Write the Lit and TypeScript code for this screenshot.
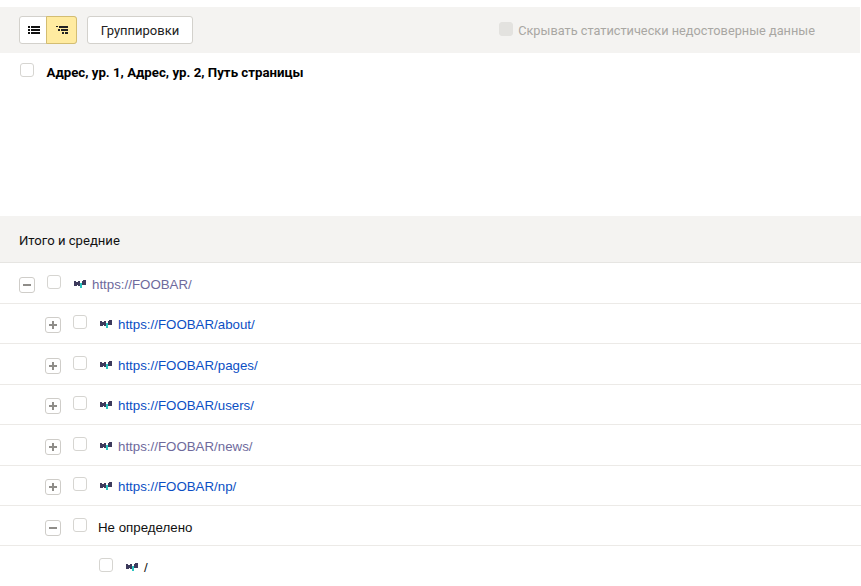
import { LitElement, html, css, svg } from "lit";
import { customElement } from "lit/decorators.js";

const favicon = html`<svg class="fav" width="12" height="8" viewBox="0 0 12 8" shape-rendering="crispEdges">
  <path fill="#3d3a5c" d="M0 1h2v1h2V1h2v5H4V5H3v1H0zM8 1h1V0h3v5H8z"/>
  <path fill="#2bc4c0" d="M6 3h2v5H6z"/>
</svg>`;

type Row = { depth: number; toggle?: "plus" | "minus"; icon: boolean; text: string; kind: "link" | "visited" | "plain" };

const rows: Row[] = [
  { depth: 0, toggle: "minus", icon: true, text: "https://FOOBAR/", kind: "visited" },
  { depth: 1, toggle: "plus", icon: true, text: "https://FOOBAR/about/", kind: "link" },
  { depth: 1, toggle: "plus", icon: true, text: "https://FOOBAR/pages/", kind: "link" },
  { depth: 1, toggle: "plus", icon: true, text: "https://FOOBAR/users/", kind: "link" },
  { depth: 1, toggle: "plus", icon: true, text: "https://FOOBAR/news/", kind: "visited" },
  { depth: 1, toggle: "plus", icon: true, text: "https://FOOBAR/np/", kind: "link" },
  { depth: 1, toggle: "minus", icon: false, text: "Не определено", kind: "plain" },
  { depth: 2, icon: true, text: "/", kind: "plain" },
];

@customElement("app-root")
export class AppRoot extends LitElement {
  static styles = css`
    :host {
      display: block;
      width: 861px;
      height: 586px;
      overflow: hidden;
      background: #fff;
      font-family: Roboto, "Liberation Sans", sans-serif;
      color: #000;
    }
    .toolbar {
      margin-top: 7px;
      height: 46px;
      width: 860px;
      box-sizing: border-box;
      background: #f4f3f1;
      display: flex;
      align-items: center;
      padding: 0 45px 0 19px;
    }
    .seg {
      display: flex;
      width: 58px;
      height: 28px;
      box-sizing: border-box;
      border: 1px solid #d3d1cc;
      border-radius: 3px;
      background: #fff;
    }
    .seg span {
      flex: 1;
      display: flex;
      align-items: center;
      justify-content: center;
    }
    .seg .on {
      flex: 0 0 29px;
      background: #ffeba0;
      border: 1px solid #d3bd72;
      margin: -1px;
      border-radius: 0 3px 3px 0;
    }
    .btn {
      margin-left: 10px;
      width: 106px;
      height: 28px;
      box-sizing: border-box;
      border: 1px solid #d3d1cc;
      border-radius: 3px;
      background: #fff;
      display: flex;
      align-items: center;
      justify-content: center;
      font-size: 13px;
      color: #222;
    }
    .hide {
      margin-left: auto;
      display: flex;
      align-items: center;
      gap: 5px;
      font-size: 12.75px;
      color: #a9a7a3;
    }
    .box {
      flex: none;
      width: 14px;
      height: 14px;
      box-sizing: border-box;
      border: 1px solid #d6d5d1;
      border-radius: 3px;
      background: #fff;
    }
    .box.dis {
      background: #e3e2df;
      border-color: #e3e2df;
      position: relative;
      top: -1px;
    }
    .dims {
      height: 163px;
      box-sizing: border-box;
      padding: 10px 20px 0;
      display: flex;
      align-items: flex-start;
      gap: 12.5px;
      font-size: 13.25px;
      font-weight: 700;
      line-height: 18px;
    }
    .dims .label { padding-top: 1px; }
    .total {
      height: 47px;
      box-sizing: border-box;
      background: #f4f3f1;
      border-bottom: 1px solid #e6e5e2;
      display: flex;
      align-items: center;
      padding-left: 19px;
      padding-top: 3px;
      font-size: 13.1px;
      color: #111;
    }
    .row {
      height: 40.5px;
      box-sizing: border-box;
      padding-top: 1px;
      border-bottom: 1px solid #eceae7;
      display: flex;
      align-items: center;
      font-family: "Liberation Sans", Arial, sans-serif;
      font-size: 13.3px;
    }
    .row:nth-last-child(2) { height: 40px; }
    .row:last-child { border-bottom: 0; }
    .d0 { padding-left: 19px; }
    .d1 { padding-left: 45px; }
    .d2 { padding-left: 99px; }
    .toggle {
      flex: none;
      width: 16px;
      height: 16px;
      box-sizing: border-box;
      border: 1px solid #cfcdc9;
      border-radius: 3px;
      background: #fff;
      margin-right: 12px;
      margin-top: 3px;
      display: flex;
      align-items: center;
      justify-content: center;
    }
    .row .box { margin-top: -3px; margin-right: 13px; }
    .fav { flex: none; margin-right: 6px; margin-top: 1px; }
    .row > span:last-child { padding-top: 2px; }
    .link { color: #0c4fc4; }
    .visited { color: #6e6a9c; }
    .plain { color: #111; }
    .d1 .box + .plain { margin-left: -2px; }
  `;

  render() {
    return html`
      <div class="toolbar">
        <div class="seg">
          <span>
            <svg width="12" height="8" viewBox="0 0 12 8" shape-rendering="crispEdges"><path fill="#111" d="M0 0h2v2H0zM3 0h9v2H3zM0 3h2v2H0zM3 3h9v2H3zM0 6h2v2H0zM3 6h9v2H3z"/></svg>
          </span>
          <span class="on">
            <svg width="12" height="8" viewBox="0 0 12 8" shape-rendering="crispEdges"><path fill="#222" d="M0 0h2v1H0zM3 0h9v2H3zM2 3h2v2H2zM5 3h7v2H5zM6 6h2v2H6zM9 6h3v2H9z"/></svg>
          </span>
        </div>
        <div class="btn">Группировки</div>
        <label class="hide"><span class="box dis"></span>Скрывать статистически недостоверные данные</label>
      </div>
      <div class="dims"><span class="box"></span><span class="label">Адрес, ур. 1, Адрес, ур. 2, Путь страницы</span></div>
      <div class="total">Итого и средние</div>
      ${rows.map(
        (r) => html`<div class="row d${r.depth}">
          ${r.toggle
            ? html`<span class="toggle">
                <svg width="10" height="10" viewBox="0 0 10 10" shape-rendering="crispEdges">
                  <path fill="#8f8d89" d="M1 4h8v2H1z"/>
                  ${r.toggle === "plus" ? svg`<path fill="#8f8d89" d="M4 1h2v8H4z"/>` : ""}
                </svg>
              </span>`
            : ""}
          <span class="box"></span>
          ${r.icon ? favicon : ""}
          <span class=${r.kind}>${r.text}</span>
        </div>`
      )}
    `;
  }
}
